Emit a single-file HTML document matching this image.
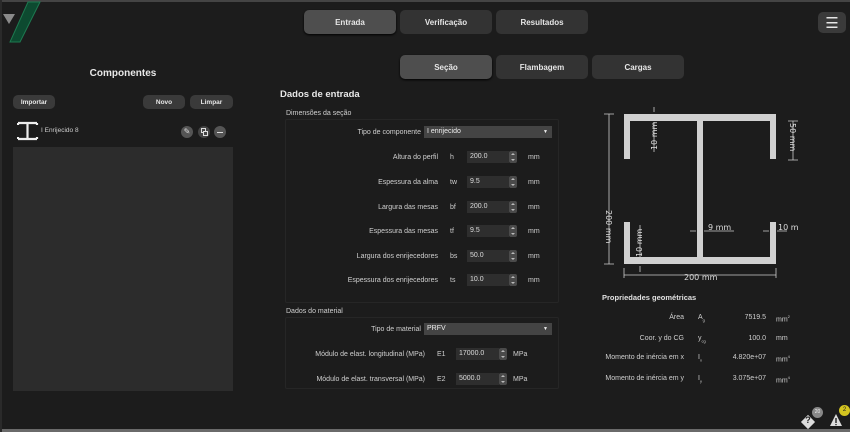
<!DOCTYPE html>
<html><head><meta charset="utf-8"><style>
*{margin:0;padding:0;box-sizing:border-box}
body{width:850px;height:432px;background:#1c1c1c;font-family:"Liberation Sans",sans-serif;color:#ddd;position:relative;overflow:hidden}
.a{position:absolute}
.btn{position:absolute;background:#333;border-radius:5px;color:#e6e6e6;font-size:8px;font-weight:bold;display:flex;align-items:center;justify-content:center}
.btn.on{background:#4e4e4e;box-shadow:0 1px 2px #000}
.s{position:absolute;font-size:7px;color:#cfcfcf;white-space:nowrap}
.r{text-align:right}
.inp{position:absolute;background:#2e2e2e;height:12px;font-size:7px;color:#ddd;padding:2px 0 0 3px}
.spin{position:absolute;background:#4a4a4a;width:8px;height:12px;border-radius:2px}
.spin:before,.spin:after{content:"";position:absolute;left:2px;border-left:2px solid transparent;border-right:2px solid transparent}
.spin:before{top:2px;border-bottom:2px solid #bbb}.spin:after{bottom:2px;border-top:2px solid #bbb}
.combo{position:absolute;background:#444;height:12px;font-size:7px;color:#eee;padding:2px 0 0 3px}
.box{position:absolute;border:1px solid #262626;border-radius:2px}
</style></head><body>
<div class="a" style="left:0;top:0;width:850px;height:2px;background:#444"></div>
<div class="a" style="left:0;top:429px;width:850px;height:3px;background:#6a6a6a"></div>
<div class="a" style="left:0;top:0;width:2px;height:432px;background:#2a2a2a"></div>
<svg class="a" style="left:0;top:0" width="50" height="45"><polygon points="28,2 40,2 20,42 10,42" fill="#0d4a30" stroke="#1d7a50" stroke-width="1"/><polygon points="3,14 15,14 9,24" fill="#8a8a8a"/></svg>
<div class="btn on" style="left:304px;top:10px;width:92px;height:24px">Entrada</div>
<div class="btn" style="left:400px;top:10px;width:92px;height:24px">Verificação</div>
<div class="btn" style="left:496px;top:10px;width:92px;height:24px">Resultados</div>
<div class="btn" style="left:818px;top:12px;width:28px;height:21px;background:#3a3a3a;font-size:15px;font-weight:normal">☰</div>
<div class="btn on" style="left:400px;top:55px;width:92px;height:24px">Seção</div>
<div class="btn" style="left:496px;top:55px;width:92px;height:24px">Flambagem</div>
<div class="btn" style="left:592px;top:55px;width:92px;height:24px">Cargas</div>

<div class="a" style="left:13px;top:68px;width:220px;text-align:center;font-size:10px;font-weight:bold;color:#e8e8e8">Componentes</div>
<div class="btn" style="left:13px;top:95px;width:42px;height:14px;font-size:6.5px;background:#3a3a3a">Importar</div>
<div class="btn" style="left:143px;top:95px;width:42px;height:14px;font-size:6.5px;background:#3a3a3a">Novo</div>
<div class="btn" style="left:190px;top:95px;width:43px;height:14px;font-size:6.5px;background:#3a3a3a">Limpar</div>
<svg class="a" style="left:17px;top:121px" width="22" height="20"><path d="M1,2H20M1,18H20M10.5,2V18M1,2V4M20,2V4M1,18V16M20,18V16" stroke="#eee" stroke-width="2.2" fill="none"/></svg>
<div class="s" style="left:41px;top:127px;font-size:6.5px">I Enrijecido 8</div>
<div class="a" style="left:181px;top:126px;width:12px;height:12px;border-radius:6px;background:#555;color:#ddd;font-size:8px;text-align:center;line-height:12px">✎</div>
<div class="a" style="left:198px;top:126px;width:12px;height:12px;border-radius:6px;background:#444"><div class="a" style="left:3px;top:2px;width:5px;height:5px;border:1px solid #ddd"></div><div class="a" style="left:5px;top:5px;width:5px;height:5px;border:1px solid #ddd;background:#444"></div></div>
<div class="a" style="left:214px;top:126px;width:12px;height:12px;border-radius:6px;background:#555"><div class="a" style="left:3px;top:5.5px;width:6px;height:1.3px;background:#ddd"></div></div>
<div class="a" style="left:13px;top:147px;width:220px;height:244px;background:#2c2c2c"></div>

<div class="a" style="left:280px;top:89px;font-size:9.5px;font-weight:bold;color:#e8e8e8">Dados de entrada</div>
<div class="s" style="left:286px;top:110px">Dimensões da seção</div>
<div class="box" style="left:285px;top:119px;width:274px;height:184px"></div>
<div class="s r" style="left:300px;top:129px;width:121px">Tipo de componente</div>
<div class="combo" style="left:424px;top:126px;width:128px">I enrijecido<span style="position:absolute;right:4px;font-size:5px;top:3px">▼</span></div>
<div class="s r" style="left:300px;top:154px;width:138px">Altura do perfil</div><div class="s" style="left:450px;top:154px">h</div><div class="inp" style="left:467px;top:151px;width:42px">200.0</div><div class="spin" style="left:509px;top:151px"></div><div class="s" style="left:528px;top:154px">mm</div>
<div class="s r" style="left:300px;top:179px;width:138px">Espessura da alma</div><div class="s" style="left:450px;top:179px">tw</div><div class="inp" style="left:467px;top:176px;width:42px">9.5</div><div class="spin" style="left:509px;top:176px"></div><div class="s" style="left:528px;top:179px">mm</div>
<div class="s r" style="left:300px;top:204px;width:138px">Largura das mesas</div><div class="s" style="left:450px;top:204px">bf</div><div class="inp" style="left:467px;top:201px;width:42px">200.0</div><div class="spin" style="left:509px;top:201px"></div><div class="s" style="left:528px;top:204px">mm</div>
<div class="s r" style="left:300px;top:228px;width:138px">Espessura das mesas</div><div class="s" style="left:450px;top:228px">tf</div><div class="inp" style="left:467px;top:225px;width:42px">9.5</div><div class="spin" style="left:509px;top:225px"></div><div class="s" style="left:528px;top:228px">mm</div>
<div class="s r" style="left:300px;top:253px;width:138px">Largura dos enrijecedores</div><div class="s" style="left:450px;top:253px">bs</div><div class="inp" style="left:467px;top:250px;width:42px">50.0</div><div class="spin" style="left:509px;top:250px"></div><div class="s" style="left:528px;top:253px">mm</div>
<div class="s r" style="left:300px;top:277px;width:138px">Espessura dos enrijecedores</div><div class="s" style="left:450px;top:277px">ts</div><div class="inp" style="left:467px;top:274px;width:42px">10.0</div><div class="spin" style="left:509px;top:274px"></div><div class="s" style="left:528px;top:277px">mm</div>

<div class="s" style="left:286px;top:308px">Dados do material</div>
<div class="box" style="left:285px;top:317px;width:274px;height:72px"></div>
<div class="s r" style="left:300px;top:326px;width:121px">Tipo de material</div>
<div class="combo" style="left:424px;top:323px;width:128px">PRFV<span style="position:absolute;right:4px;font-size:5px;top:3px">▼</span></div>
<div class="s r" style="left:290px;top:351px;width:135px">Módulo de elast. longitudinal (MPa)</div><div class="s" style="left:437px;top:351px">E1</div><div class="inp" style="left:456px;top:348px;width:43px">17000.0</div><div class="spin" style="left:499px;top:348px"></div><div class="s" style="left:513px;top:351px">MPa</div>
<div class="s r" style="left:290px;top:376px;width:135px">Módulo de elast. transversal (MPa)</div><div class="s" style="left:437px;top:376px">E2</div><div class="inp" style="left:456px;top:373px;width:43px">5000.0</div><div class="spin" style="left:499px;top:373px"></div><div class="s" style="left:513px;top:376px">MPa</div>

<svg class="a" style="left:590px;top:100px" width="260" height="190" font-family="DejaVu Sans" font-size="8" fill="#ddd">
<path d="M34,59V14H186V59H180V21H113V157H180V122H186V164H34V122H40V157H107V21H40V59Z" fill="#d0d0d0"/>
<g stroke="#ccc" stroke-width="0.8" fill="none">
<path d="M19,14V164M14,14H24M14,164H24"/>
<path d="M64,7V12M64,22V52"/>
<path d="M203,21V60M198,21H208M198,60H208"/>
<path d="M34,168V178M186,168V178M34,175H186"/>
<path d="M100,131H106M114,131H144M173,131H179M187,131H197"/>
<path d="M50,125V158M50,166V172"/>
</g>
<text x="0" y="0" transform="translate(16,110) rotate(90)" font-size="8">200 mm</text>
<text transform="translate(67,50) rotate(-90)">10 mm</text>
<text transform="translate(200,23) rotate(90)">50 mm</text>
<text transform="translate(52,157) rotate(-90)">10 mm</text>
<text x="118" y="130">9 mm</text>
<text x="188" y="130">10 m</text>
<text x="94" y="180">200 mm</text>
</svg>

<div class="a" style="left:602px;top:293px;font-size:7.5px;font-weight:bold;color:#e0e0e0">Propriedades geométricas</div>
<div class="s r" style="left:580px;top:314px;width:104px">Área</div><div class="s" style="left:698px;top:314px">A<sub style="font-size:4px">g</sub></div><div class="s r" style="left:720px;top:314px;width:46px">7519.5</div><div class="s" style="left:776px;top:314px">mm<sup style="font-size:4px">2</sup></div>
<div class="s r" style="left:580px;top:335px;width:104px">Coor. y do CG</div><div class="s" style="left:698px;top:335px">y<sub style="font-size:4px">cg</sub></div><div class="s r" style="left:720px;top:335px;width:46px">100.0</div><div class="s" style="left:776px;top:335px">mm</div>
<div class="s r" style="left:580px;top:354px;width:104px">Momento de inércia em x</div><div class="s" style="left:698px;top:354px">I<sub style="font-size:4px">x</sub></div><div class="s r" style="left:720px;top:354px;width:46px">4.820e+07</div><div class="s" style="left:776px;top:354px">mm<sup style="font-size:4px">4</sup></div>
<div class="s r" style="left:580px;top:375px;width:104px">Momento de inércia em y</div><div class="s" style="left:698px;top:375px">I<sub style="font-size:4px">y</sub></div><div class="s r" style="left:720px;top:375px;width:46px">3.075e+07</div><div class="s" style="left:776px;top:375px">mm<sup style="font-size:4px">4</sup></div>

<div class="a" style="left:803px;top:417px;width:10px;height:10px;background:#ddd;transform:rotate(45deg)"></div>
<div class="a" style="left:803px;top:415px;width:10px;text-align:center;font-size:9px;font-weight:bold;color:#222">?</div>
<div class="a" style="left:812px;top:407px;width:11px;height:11px;border-radius:6px;background:#888;font-size:5px;text-align:center;line-height:11px;color:#eee">20</div>
<svg class="a" style="left:829px;top:413px" width="14" height="14"><polygon points="7,1 13,13 1,13" fill="#ddd"/><rect x="6.3" y="5" width="1.4" height="5" fill="#222"/><rect x="6.3" y="11" width="1.4" height="1.2" fill="#222"/></svg>
<div class="a" style="left:839px;top:405px;width:11px;height:11px;border-radius:6px;background:#d4c420;font-size:6px;text-align:center;line-height:11px;color:#222">2</div>
</body></html>
